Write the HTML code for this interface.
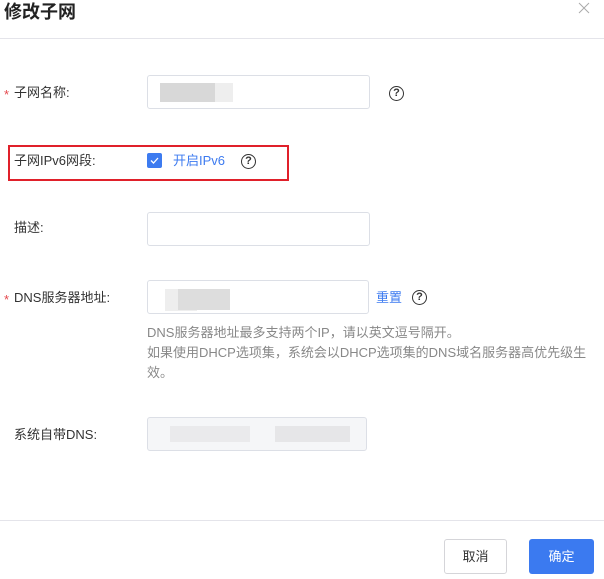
<!DOCTYPE html>
<html><head><meta charset="utf-8"><style>
*{margin:0;padding:0;box-sizing:border-box}
body{width:604px;height:579px;background:#fff;font-family:"Liberation Sans","Noto Sans CJK SC",sans-serif;font-size:13px;color:#333;position:relative;overflow:hidden}
.a{position:absolute}
.inp{position:absolute;border:1px solid #dcdfe6;border-radius:3px;background:#fff}
.lbl{position:absolute;left:14px;line-height:16px}
.star{position:absolute;left:4px;color:#e5484d}
.help{position:absolute;width:15px;height:15px;border:1.6px solid #333;border-radius:50%;font-size:11px;font-weight:bold;text-align:center;line-height:12px;color:#333}
.blur{position:absolute;background:#ddd}
</style></head><body>
<div class="a" style="left:4px;top:0;font-size:18px;font-weight:bold;color:#222;line-height:24px">修改子网</div>
<svg class="a" style="left:578px;top:2px" width="12" height="12"><path d="M1 1L11 11M11 1L1 11" stroke="#aaa" stroke-width="1"/></svg>
<div class="a" style="left:0;top:38px;width:604px;height:1px;background:#e4e4ea"></div>

<span class="star" style="top:87px">*</span><div class="lbl" style="top:85px">子网名称:</div>
<div class="inp" style="left:147px;top:75px;width:223px;height:34px"></div>
<div class="blur" style="left:160px;top:83px;width:55px;height:19px;background:#d8d8d8"></div>
<div class="blur" style="left:215px;top:83px;width:18px;height:19px;background:#eee"></div>
<div class="help" style="left:389px;top:86px">?</div>

<div class="a" style="left:8px;top:145px;width:281px;height:36px;border:2px solid #e0202a"></div>
<div class="lbl" style="top:153px">子网IPv6网段:</div>
<div class="a" style="left:147px;top:153px;width:15px;height:15px;background:#3d7bf0;border-radius:2px"></div>
<svg class="a" style="left:147px;top:153px" width="15" height="15"><path d="M4 7.5L6.5 10L11 5" stroke="#fff" stroke-width="1.3" fill="none"/></svg>
<div class="a" style="left:173px;top:153px;color:#3d7bf0;line-height:16px">开启IPv6</div>
<div class="help" style="left:241px;top:154px">?</div>

<div class="lbl" style="top:220px">描述:</div>
<div class="inp" style="left:147px;top:212px;width:223px;height:34px"></div>

<span class="star" style="top:292px">*</span><div class="lbl" style="top:290px">DNS服务器地址:</div>
<div class="inp" style="left:147px;top:280px;width:222px;height:34px"></div>
<div class="blur" style="left:165px;top:289px;width:32px;height:22px;background:#eee"></div>
<div class="blur" style="left:178px;top:289px;width:52px;height:21px;background:#ddd"></div>
<div class="a" style="left:376px;top:290px;color:#3d7bf0;line-height:16px">重置</div>
<div class="help" style="left:412px;top:290px">?</div>
<div class="a" style="left:147px;top:323px;width:450px;color:#888;line-height:20px">DNS服务器地址最多支持两个IP，请以英文逗号隔开。<br>如果使用DHCP选项集，系统会以DHCP选项集的DNS域名服务器高优先级生效。</div>

<div class="lbl" style="top:427px">系统自带DNS:</div>
<div class="inp" style="left:147px;top:417px;width:220px;height:34px;background:#f5f6f8"></div>
<div class="blur" style="left:170px;top:426px;width:80px;height:16px;background:#eaeaec"></div>
<div class="blur" style="left:275px;top:426px;width:75px;height:16px;background:#e6e6e8"></div>

<div class="a" style="left:0;top:520px;width:604px;height:1px;background:#e4e4ea"></div>
<div class="a" style="left:444px;top:539px;width:63px;height:35px;border:1px solid #d5d5d9;border-radius:3px;text-align:center;line-height:33px;color:#333">取消</div>
<div class="a" style="left:529px;top:539px;width:65px;height:35px;background:#3b7af0;border-radius:3px;text-align:center;line-height:35px;color:#fff">确定</div>
</body></html>
